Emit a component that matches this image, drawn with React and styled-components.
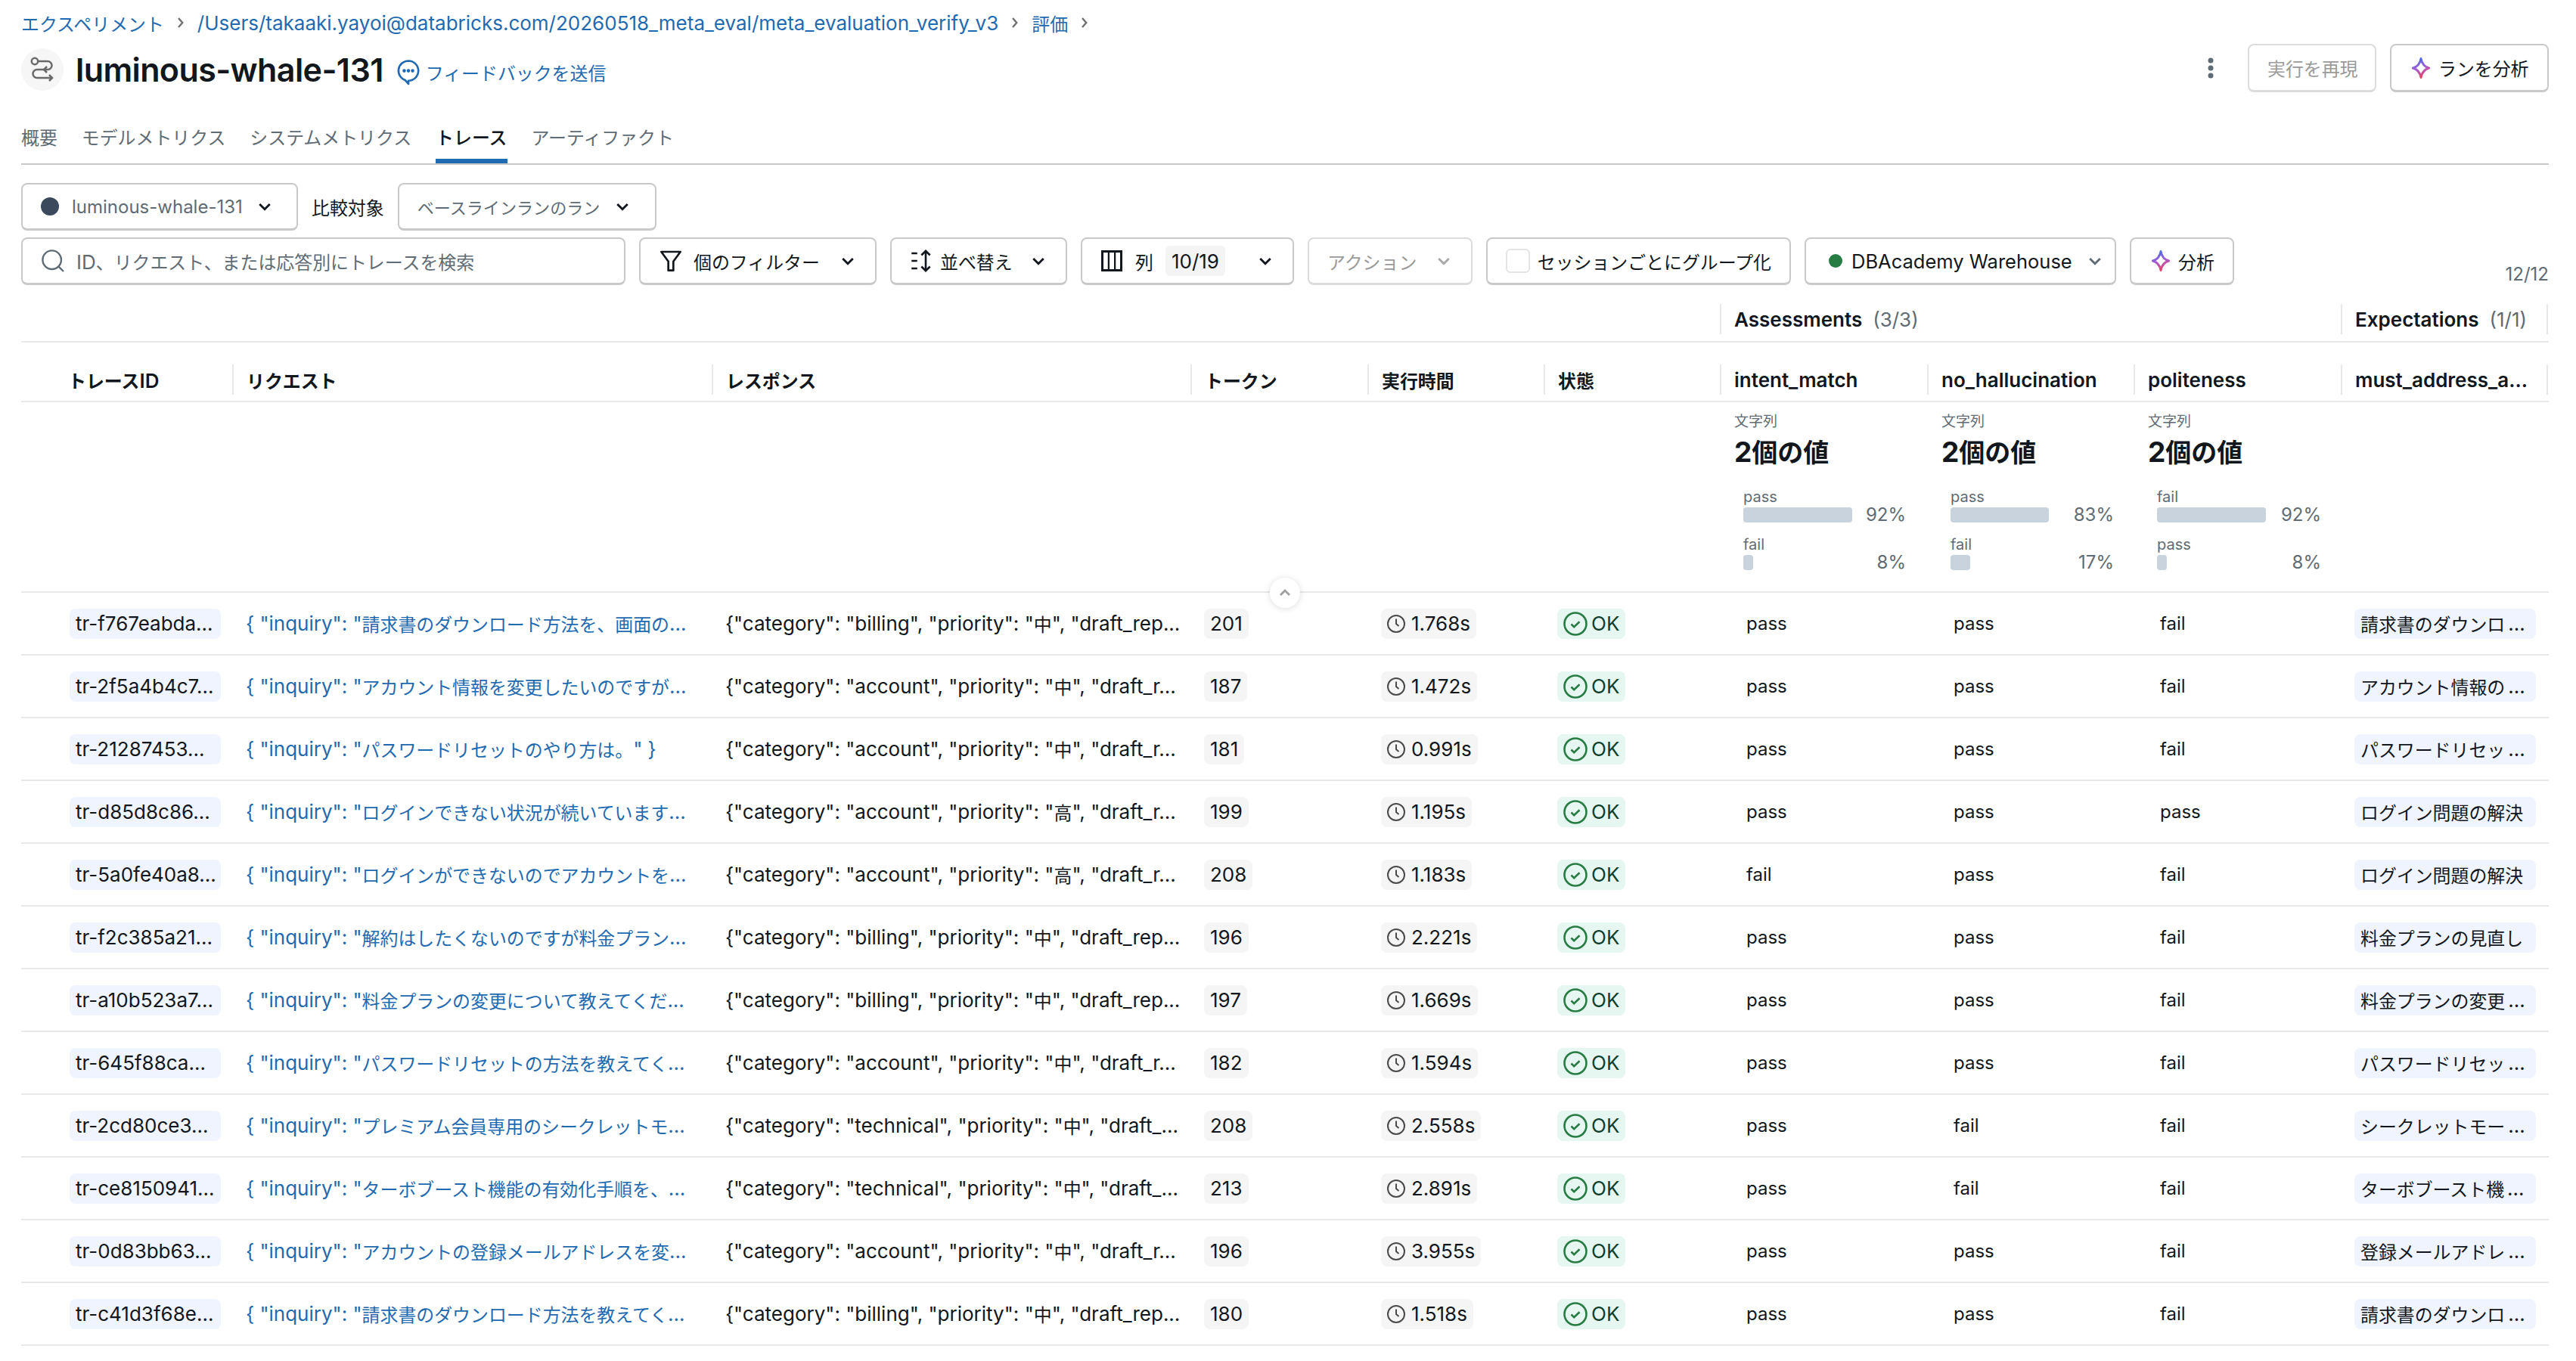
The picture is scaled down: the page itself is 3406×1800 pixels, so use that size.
import React from "react";
import styled, { createGlobalStyle } from "styled-components";

const SANS = `Inter, "Noto Sans CJK JP", "Liberation Sans", sans-serif`;
const COLS = "279px 634px 633px 234px 233px 233px 274px 273px 274px 272px 1fr";
const LINK = "#1f6ab0";

const Global = createGlobalStyle`
  html, body { margin: 0; padding: 0; background: #fff; }
  body { font-family: ${SANS}; color: #11171c; font-size: 26px; -webkit-font-smoothing: antialiased; }
  * { box-sizing: border-box; }
  svg { flex: none; }
`;

const CjkRun = styled.span`
  font-size: 0.92em;
`;
const T = ({ children }) => (
  <>
    {String(children)
      .split(/([\u3000-\u30ff\u3400-\u9fff\uff00-\uffef]+)/)
      .map((part, i) => (i % 2 ? <CjkRun key={i}>{part}</CjkRun> : part))}
  </>
);

const Page = styled.div`
  width: 3406px;
  height: 1800px;
  overflow: hidden;
  padding: 12px 36px 0 28px;
`;
const Crumbs = styled.nav`
  display: flex;
  align-items: center;
  gap: 15px;
  height: 36px;
  font-size: 26px;
  color: ${LINK};
`;
const CrumbSep = styled.svg`
  width: 14px;
  height: 18px;
  fill: none;
  stroke: #6f6f6f;
  stroke-width: 1.6;
`;
const TitleRow = styled.div`
  display: flex;
  align-items: center;
  height: 72px;
  margin-top: 8px;
`;
const RunBadge = styled.div`
  width: 56px;
  height: 56px;
  border-radius: 50%;
  background: #f6f6f6;
  display: flex;
  align-items: center;
  justify-content: center;
  margin-right: 16px;
`;
const Title = styled.h1`
  margin: 0;
  font-size: 43px;
  font-weight: 600;
  letter-spacing: -0.6px;
  line-height: 56px;
`;
const Feedback = styled.a`
  display: flex;
  align-items: center;
  gap: 6px;
  margin-left: 16px;
  margin-top: 6px;
  color: ${LINK};
`;
const TitleActions = styled.div`
  margin-left: auto;
  margin-top: -4px;
  display: flex;
  align-items: center;
  gap: 18px;
`;
const Kebab = styled.svg`
  width: 12px;
  height: 28px;
  margin-right: 25px;
  fill: #5f6b75;
`;
const Btn = styled.button`
  display: inline-flex;
  align-items: center;
  gap: ${(p) => p.$gap ?? 8}px;
  height: ${(p) => p.$h ?? 63}px;
  width: ${(p) => (p.$w ? `${p.$w}px` : "auto")};
  padding: 0 ${(p) => p.$padR ?? p.$pad ?? 24}px 0 ${(p) => p.$pad ?? 24}px;
  border: 2px solid ${(p) => (p.$disabled ? "#dcdcdc" : "#c9c9c9")};
  border-bottom-width: 3px;
  border-radius: 8px;
  background: #fff;
  color: ${(p) => (p.$disabled ? "#9a9a9a" : "#11171c")};
  font: inherit;
  font-size: ${(p) => p.$fs ?? 26}px;
  white-space: nowrap;
`;
const Tabs = styled.div`
  display: flex;
  gap: 32px;
  height: 78px;
  margin-top: 12px;
  padding-top: 10px;
  border-bottom: 2px solid #c8c8c8;
`;
const Tab = styled.div`
  height: 66px;
  padding-top: 13px;
  color: ${(p) => (p.$active ? "#11171c" : "#5f6b75")};
  border-bottom: 6px solid ${(p) => (p.$active ? LINK : "transparent")};
  font-weight: ${(p) => (p.$active ? 500 : 400)};
`;
const RunRow = styled.div`
  display: flex;
  align-items: center;
  margin-top: 24px;
  gap: 18px;
`;
const Dot = styled.span`
  width: ${(p) => p.$size ?? 24}px;
  height: ${(p) => p.$size ?? 24}px;
  border-radius: 50%;
  background: ${(p) => p.$color};
  flex: none;
`;
const Label = styled.span`
  color: ${(p) => p.$color ?? "#11171c"};
  flex: 1;
  text-align: left;
`;
const Toolbar = styled.div`
  display: flex;
  align-items: stretch;
  margin-top: 9px;
  gap: 18px;
  height: 63px;
`;
const Search = styled.div`
  width: 799px;
  display: flex;
  align-items: center;
  gap: 15px;
  padding: 0 24px;
  border: 2px solid #c9c9c9;
  border-bottom-width: 3px;
  border-radius: 8px;
  color: #5f6b75;
`;
const Count = styled.span`
  background: #f4f4f4;
  border-radius: 6px;
  height: 40px;
  display: inline-flex;
  align-items: center;
  padding: 0 8px;
`;
const GroupBox = styled.span`
  width: 32px;
  height: 32px;
  border: 2px solid #e4e4e4;
  border-radius: 6px;
`;
const ResultCount = styled.span`
  margin-left: auto;
  align-self: flex-end;
  color: #5f6b75;
  font-size: 24px;
  line-height: 28px;
`;
const Table = styled.div`
  margin-top: 25px;
`;
const TableRow = styled.div`
  display: grid;
  grid-template-columns: ${COLS};
  border-bottom: 2px solid #e8e8e8;
  align-items: ${(p) => p.$align ?? "center"};
  height: ${(p) => p.$h}px;
  padding-top: ${(p) => p.$pt ?? 0}px;
  position: relative;
`;
const HeadCell = styled.div`
  height: 40px;
  grid-column: span ${(p) => p.$span ?? 1};
  display: flex;
  align-items: center;
  gap: 14px;
  padding-left: ${(p) => p.$pl ?? 17}px;
  border-left: ${(p) => (p.$plain ? "none" : "2px solid #e8e8e8")};
  font-weight: 600;
  white-space: nowrap;
`;
const GroupCount = styled.span`
  color: #5f6b75;
  font-weight: 400;
`;
const Spacer = styled.div`
  grid-column: span 6;
`;
const SummaryCell = styled.div`
  padding: 15px 0 0 19px;
  height: 100%;
`;
const KindLabel = styled.div`
  color: #5f6b75;
  font-size: 19px;
  line-height: 22px;
`;
const ValueCount = styled.div`
  font-size: 37px;
  font-weight: 700;
  line-height: 44px;
  margin-top: 7px;
`;
const Dist = styled.div`
  margin: 24px 0 0 12px;
  width: ${(p) => p.$w}px;
  display: flex;
  flex-direction: column;
  gap: 17px;
`;
const DistItem = styled.div`
  display: grid;
  grid-template-columns: 1fr auto;
  align-items: end;
  color: #5f6b75;
  font-size: 20px;
`;
const DistLabel = styled.div`
  grid-column: 1 / -1;
  line-height: 24px;
  height: 26px;
`;
const Track = styled.div`
  height: 20px;
`;
const Bar = styled.div`
  height: 20px;
  background: #c9d3dd;
  border-radius: 4px;
`;
const Pct = styled.div`
  font-size: 24px;
  line-height: 20px;
`;
const Collapse = styled.div`
  position: absolute;
  left: 1651px;
  bottom: -22px;
  width: 40px;
  height: 40px;
  border-radius: 50%;
  background: #fff;
  box-shadow: 0 1px 8px rgba(0, 0, 0, 0.14);
  display: flex;
  align-items: center;
  justify-content: center;
`;
const BodyCell = styled.div`
  padding-left: ${(p) => p.$pl ?? 18}px;
  min-width: 0;
  display: flex;
  align-items: center;
  white-space: nowrap;
  color: ${(p) => p.$color ?? "#11171c"};
`;
const VerdictCell = styled(BodyCell)`
  padding-left: 35px;
  font-size: 24px;
`;
const Tag = styled.span`
  display: inline-flex;
  align-items: center;
  gap: ${(p) => p.$gap ?? 4}px;
  height: 40px;
  width: ${(p) => (p.$w ? `${p.$w}px` : "auto")};
  padding: 0 8px;
  border-radius: 8px;
  background: ${(p) => p.$bg};
  color: ${(p) => p.$color ?? "#11171c"};
  white-space: nowrap;
`;

const Chevron = ({ size = 24, color = "#11171c", up = false }) => (
  <svg width={size} height={size} viewBox="0 0 16 16" fill="none" stroke={color} strokeWidth="1.900">
    <path d={up ? "M4 10l4-4 4 4" : "M3.500 6l4.500 4.500L12.500 6"} />
  </svg>
);
const Sep = () => (
  <CrumbSep viewBox="0 0 8 12">
    <path d="M2 2l3.500 4L2 10" />
  </CrumbSep>
);
const Sparkle = ({ id, size = 30 }) => (
  <svg width={size} height={size} viewBox="0 0 24 24" fill="none">
    <defs>
      <linearGradient id={id} x1="0.3" y1="0" x2="0.6" y2="1">
        <stop offset="0" stopColor="#4a6cf0" />
        <stop offset="0.5" stopColor="#a55bd6" />
        <stop offset="1" stopColor="#f0405f" />
      </linearGradient>
    </defs>
    <path
      d="M12 2c1 5.200 4 8.800 8.500 10C16 13.200 13 16.800 12 22 11 16.800 8 13.200 3.500 12 8 10.800 11 7.200 12 2z"
      stroke={`url(#${id})`}
      strokeWidth="2.300"
      strokeLinejoin="round"
    />
  </svg>
);
const RunIcon = () => (
  <svg width="36" height="36" viewBox="0 0 36 36" fill="none" stroke="#6a6a6a" strokeWidth="2.500">
    <circle cx="8" cy="7" r="4.200" />
    <path d="M12.500 7H25a5.500 5.500 0 0 1 0 11H11a5.500 5.500 0 0 0 0 11h19" />
    <path d="M24 14l-4 4 4 4M27 25l4 4-4 4" />
  </svg>
);
const ChatIcon = () => (
  <svg width="34" height="36" viewBox="0 0 24 26" fill="none" stroke={LINK} strokeWidth="1.900">
    <path d="M12 2.500a9.500 9.500 0 0 0-3 18.500l3 3.500v-3a9.500 9.500 0 0 0 0-19z" strokeLinejoin="round" />
    <circle cx="8" cy="12" r=".7" fill={LINK} />
    <circle cx="12" cy="12" r=".7" fill={LINK} />
    <circle cx="16" cy="12" r=".7" fill={LINK} />
  </svg>
);
const SearchIcon = () => (
  <svg width="32" height="32" viewBox="0 0 24 24" fill="none" stroke="#5f6b75" strokeWidth="1.800">
    <circle cx="11" cy="11" r="9.200" />
    <path d="M17.500 17.500l5 5" />
  </svg>
);
const FilterIcon = () => (
  <svg width="32" height="32" viewBox="0 0 24 24" fill="none" stroke="#11171c" strokeWidth="2">
    <path d="M2.500 3h19L14.500 12.500V21.500h-5V12.500z" strokeLinejoin="round" />
  </svg>
);
const SortIcon = () => (
  <svg width="32" height="30" viewBox="0 0 24 24" fill="none" stroke="#11171c" strokeWidth="2.100">
    <path d="M1 4h6M1 12h6M1 20h6" />
    <path d="M16 1.500v21M11.500 6L16 1.500 20.500 6M11.500 18l4.500 4.500 4.500-4.500" />
  </svg>
);
const ColumnsIcon = () => (
  <svg width="30" height="30" viewBox="0 0 24 24" fill="none" stroke="#11171c" strokeWidth="2.400">
    <rect x="2" y="2" width="20" height="20" />
    <path d="M8.700 2v20M15.300 2v20" strokeWidth="1.800" />
  </svg>
);
const ClockIcon = () => (
  <svg width="24" height="24" viewBox="0 0 24 24" fill="none" stroke="#4a4a4a" strokeWidth="2">
    <circle cx="12" cy="12" r="11" />
    <path d="M12 5.500V12l3.500 3" />
  </svg>
);
const OkIcon = () => (
  <svg width="32" height="32" viewBox="0 0 32 32" fill="none" stroke="#277c43" strokeWidth="2.600">
    <circle cx="16" cy="16" r="14.500" />
    <path d="M10.500 16.500l3.700 3.700 7.300-7" />
  </svg>
);

const ROWS = [
  ["tr-f767eabda...", '{ "inquiry": "請求書のダウンロード方法を、画面の...', '{"category": "billing", "priority": "中", "draft_rep...', "201", "1.768s", "pass", "pass", "fail", "請求書のダウンロ..."],
  ["tr-2f5a4b4c7...", '{ "inquiry": "アカウント情報を変更したいのですが...', '{"category": "account", "priority": "中", "draft_r...', "187", "1.472s", "pass", "pass", "fail", "アカウント情報の..."],
  ["tr-21287453...", '{ "inquiry": "パスワードリセットのやり方は。" }', '{"category": "account", "priority": "中", "draft_r...', "181", "0.991s", "pass", "pass", "fail", "パスワードリセッ..."],
  ["tr-d85d8c86...", '{ "inquiry": "ログインできない状況が続いています...', '{"category": "account", "priority": "高", "draft_r...', "199", "1.195s", "pass", "pass", "pass", "ログイン問題の解決"],
  ["tr-5a0fe40a8...", '{ "inquiry": "ログインができないのでアカウントを...', '{"category": "account", "priority": "高", "draft_r...', "208", "1.183s", "fail", "pass", "fail", "ログイン問題の解決"],
  ["tr-f2c385a21...", '{ "inquiry": "解約はしたくないのですが料金プラン...', '{"category": "billing", "priority": "中", "draft_rep...', "196", "2.221s", "pass", "pass", "fail", "料金プランの見直し"],
  ["tr-a10b523a7...", '{ "inquiry": "料金プランの変更について教えてくだ...', '{"category": "billing", "priority": "中", "draft_rep...', "197", "1.669s", "pass", "pass", "fail", "料金プランの変更..."],
  ["tr-645f88ca...", '{ "inquiry": "パスワードリセットの方法を教えてく...', '{"category": "account", "priority": "中", "draft_r...', "182", "1.594s", "pass", "pass", "fail", "パスワードリセッ..."],
  ["tr-2cd80ce3...", '{ "inquiry": "プレミアム会員専用のシークレットモ...', '{"category": "technical", "priority": "中", "draft_...', "208", "2.558s", "pass", "fail", "fail", "シークレットモー..."],
  ["tr-ce8150941...", '{ "inquiry": "ターボブースト機能の有効化手順を、...', '{"category": "technical", "priority": "中", "draft_...', "213", "2.891s", "pass", "fail", "fail", "ターボブースト機..."],
  ["tr-0d83bb63...", '{ "inquiry": "アカウントの登録メールアドレスを変...', '{"category": "account", "priority": "中", "draft_r...', "196", "3.955s", "pass", "pass", "fail", "登録メールアドレ..."],
  ["tr-c41d3f68e...", '{ "inquiry": "請求書のダウンロード方法を教えてく...', '{"category": "billing", "priority": "中", "draft_rep...', "180", "1.518s", "pass", "pass", "fail", "請求書のダウンロ..."],
];

const SUMMARY = [
  { w: 215, items: [["pass", 144, "92%"], ["fail", 13, "8%"]] },
  { w: 216, items: [["pass", 130, "83%"], ["fail", 26, "17%"]] },
  { w: 217, items: [["fail", 144, "92%"], ["pass", 13, "8%"]] },
];

export default function App() {
  return (
    <Page>
      <Global />
      <Crumbs>
        <span><T>エクスペリメント</T></span>
        <Sep />
        <span>/Users/takaaki.yayoi@databricks.com/20260518_meta_eval/meta_evaluation_verify_v3</span>
        <Sep />
        <span><T>評価</T></span>
        <Sep />
      </Crumbs>
      <TitleRow>
        <RunBadge><RunIcon /></RunBadge>
        <Title>luminous-whale-131</Title>
        <Feedback><ChatIcon /><span><T>フィードバックを送信</T></span></Feedback>
        <TitleActions>
          <Kebab viewBox="0 0 12 28">
            <circle cx="6" cy="4" r="3.500" />
            <circle cx="6" cy="14" r="3.500" />
            <circle cx="6" cy="24" r="3.500" />
          </Kebab>
          <Btn $disabled $w={170} $h={64}><T>実行を再現</T></Btn>
          <Btn $w={210} $h={64}><Sparkle id="sp1" /><Label><T>ランを分析</T></Label></Btn>
        </TitleActions>
      </TitleRow>
      <Tabs>
        <Tab><T>概要</T></Tab>
        <Tab><T>モデルメトリクス</T></Tab>
        <Tab><T>システムメトリクス</T></Tab>
        <Tab $active><T>トレース</T></Tab>
        <Tab><T>アーティファクト</T></Tab>
      </Tabs>
      <RunRow>
        <Btn $w={366} $fs={24} $pad={24} $padR={31} $gap={17}>
          <Dot $color="#3a4a5c" />
          <Label $color="#5f6b75">luminous-whale-131</Label>
          <Chevron />
        </Btn>
        <span><T>比較対象</T></span>
        <Btn $w={342} $fs={24} $padR={31}>
          <Label $color="#5f6b75"><T>ベースラインランのラン</T></Label>
          <Chevron />
        </Btn>
      </RunRow>
      <Toolbar>
        <Search><SearchIcon /><span><T>ID、リクエスト、または応答別にトレースを検索</T></span></Search>
        <Btn $w={314} $gap={14}><FilterIcon /><Label><T>個のフィルター</T></Label><Chevron /></Btn>
        <Btn $w={234} $gap={8}><SortIcon /><Label><T>並べ替え</T></Label><Chevron /></Btn>
        <Btn $w={282} $gap={16}><ColumnsIcon /><T>列</T><Count>10/19</Count><Label /><Chevron /></Btn>
        <Btn $disabled $w={218}><Label $color="#9a9a9a"><T>アクション</T></Label><Chevron color="#a8a8a8" /></Btn>
        <Btn $w={403} $gap={10}><GroupBox /><T>セッションごとにグループ化</T></Btn>
        <Btn $w={412} $pad={30} $padR={14} $gap={12} $fs={25.5}><Dot $size={18} $color="#277c43" /><Label>DBAcademy Warehouse</Label><Chevron color="#5f6b75" /></Btn>
        <Btn $w={138}><Sparkle id="sp2" /><T>分析</T></Btn>
        <ResultCount>12/12</ResultCount>
      </Toolbar>
      <Table>
        <TableRow $align="start" $h={51}>
          <HeadCell $span={6} $plain />
          <HeadCell $span={3}>Assessments<GroupCount>(3/3)</GroupCount></HeadCell>
          <HeadCell>Expectations<GroupCount>(1/1)</GroupCount></HeadCell>
          <HeadCell $pl={0} />
        </TableRow>
        <TableRow $align="start" $h={79} $pt={29}>
          <HeadCell $plain $pl={62}><span><T>トレースID</T></span></HeadCell>
          <HeadCell><T>リクエスト</T></HeadCell>
          <HeadCell><T>レスポンス</T></HeadCell>
          <HeadCell><T>トークン</T></HeadCell>
          <HeadCell><T>実行時間</T></HeadCell>
          <HeadCell><T>状態</T></HeadCell>
          <HeadCell>intent_match</HeadCell>
          <HeadCell>no_hallucination</HeadCell>
          <HeadCell>politeness</HeadCell>
          <HeadCell>must_address_a...</HeadCell>
          <HeadCell $pl={0} />
        </TableRow>
        <TableRow $align="start" $h={252}>
          <Spacer />
          {SUMMARY.map((s, i) => (
            <SummaryCell key={i}>
              <KindLabel>文字列</KindLabel>
              <ValueCount><T>2個の値</T></ValueCount>
              <Dist $w={s.w}>
                {s.items.map(([label, w, pct]) => (
                  <DistItem key={label}>
                    <DistLabel>{label}</DistLabel>
                    <Track><Bar style={{ width: w }} /></Track>
                    <Pct>{pct}</Pct>
                  </DistItem>
                ))}
              </Dist>
            </SummaryCell>
          ))}
          <Collapse><Chevron size={24} color="#a0a0a0" up /></Collapse>
        </TableRow>
        {ROWS.map((r) => (
          <TableRow key={r[0]} $h={83}>
            <BodyCell $pl={64}><Tag $w={200} $bg="#eff4ff">{r[0]}</Tag></BodyCell>
            <BodyCell $color={LINK}><T>{r[1]}</T></BodyCell>
            <BodyCell><T>{r[2]}</T></BodyCell>
            <BodyCell><Tag $bg="#f5f5f5">{r[3]}</Tag></BodyCell>
            <BodyCell><Tag $bg="#f5f5f5" $gap={8}><ClockIcon />{r[4]}</Tag></BodyCell>
            <BodyCell><Tag $bg="#e6f7f1" $gap={5} $color="#0f3f2f"><OkIcon />OK</Tag></BodyCell>
            <VerdictCell>{r[5]}</VerdictCell>
            <VerdictCell>{r[6]}</VerdictCell>
            <VerdictCell>{r[7]}</VerdictCell>
            <BodyCell><Tag $w={240} $bg="#eff4ff"><T>{r[8]}</T></Tag></BodyCell>
          </TableRow>
        ))}
      </Table>
    </Page>
  );
}
